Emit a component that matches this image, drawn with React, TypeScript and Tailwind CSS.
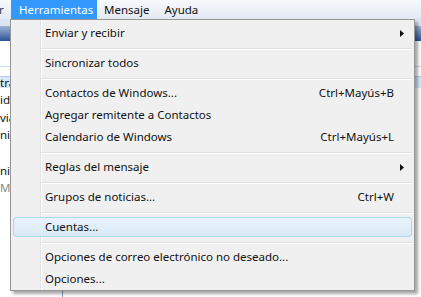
import React from "react";

type Item =
  | { label: string; shortcut?: string; sub?: boolean; hover?: boolean }
  | "sep";

const items: Item[] = [
  { label: "Enviar y recibir", sub: true },
  "sep",
  { label: "Sincronizar todos" },
  "sep",
  { label: "Contactos de Windows...", shortcut: "Ctrl+Mayús+B" },
  { label: "Agregar remitente a Contactos" },
  { label: "Calendario de Windows", shortcut: "Ctrl+Mayús+L" },
  "sep",
  { label: "Reglas del mensaje", sub: true },
  "sep",
  { label: "Grupos de noticias...", shortcut: "Ctrl+W" },
  "sep",
  { label: "Cuentas...", hover: true },
  "sep",
  { label: "Opciones de correo electrónico no deseado..." },
  { label: "Opciones..." },
];

function Arrow() {
  return (
    <svg width="4" height="7" viewBox="0 0 4 7">
      <path d="M0 0 L4 3.5 L0 7 Z" fill="#111" />
    </svg>
  );
}

function Menu() {
  return (
    <div className="absolute left-[10px] top-[19px] w-[405px] h-[272px] border border-[#979797] bg-[#f0f0f0] pt-[2px] shadow-[3px_3px_3px_rgba(0,0,0,0.35)]">
      <div className="absolute left-[29px] top-0 bottom-0 w-[1px] bg-[#e2e3e3]" />
      <div className="absolute left-[30px] top-0 bottom-0 w-[1px] bg-white" />
      {items.map((it, i) =>
        it === "sep" ? (
          <div key={i} className="relative h-[8px] ml-[30px] mr-[2px] pt-[4px]">
            <div className="h-[1px] bg-[#e0e0e0]" />
            <div className="h-[1px] bg-white" />
          </div>
        ) : (
          <div key={i} className="relative z-10 h-[22px] px-[2px] py-[1px]">
            <div
              className={
                it.hover
                  ? "h-full flex items-center rounded-[3px] border border-[#a8d8eb] bg-[linear-gradient(#e8f3fa,#d9eaf5)] pl-[31px] pr-[7px]"
                  : "h-full flex items-center rounded-[3px] border border-transparent pl-[31px] pr-[7px]"
              }
            >
              <span className="flex-1 whitespace-nowrap">{it.label}</span>
              {it.shortcut && <span className="whitespace-nowrap">{it.shortcut}</span>}
              <span className="w-[10px] flex justify-end items-center">
                {it.sub && <Arrow />}
              </span>
            </div>
          </div>
        )
      )}
    </div>
  );
}

export default function App() {
  return (
    <div className="relative w-[421px] h-[297px] overflow-hidden bg-white text-[11.5px] text-[#111] font-['Noto_Sans',sans-serif] leading-none">
      {/* menu bar */}
      <div className="h-[19px] flex items-stretch bg-[linear-gradient(#f7f9fc,#e3e9f4)]">
        <div className="w-[11px] flex items-center overflow-hidden text-[#1e395b]">
          <span className="ml-[-1px]">r</span>
        </div>
        <div className="w-[86px] flex items-center pl-[8px] bg-[#3399ff] text-white">Herramientas</div>
        <div className="flex items-center pl-[7px] pr-[8px]">Mensaje</div>
        <div className="flex items-center pl-[7px]">Ayuda</div>
      </div>
      {/* toolbar */}
      <div className="h-[7px] bg-[#dce4f2]" />
      <div className="h-[15px] bg-[linear-gradient(#9fb3d5,#2a5395)]" />
      <div className="h-[1px] bg-white" />
      <div className="h-[25px] bg-white border-b border-[#c8d8ee]" />
      {/* folder list behind */}
      <div className="flex flex-col pt-[9px]">
        <div className="h-[12px] bg-[#d9e7f8] border-t border-[#b5cdee] flex items-center whitespace-nowrap">tra</div>
        <div className="h-[17px] flex items-end whitespace-nowrap">id</div>
        <div className="h-[18px] flex items-end whitespace-nowrap">via</div>
        <div className="h-[17px] flex items-end whitespace-nowrap">ni</div>
        <div className="h-[18px]" />
        <div className="h-[18px] flex items-end whitespace-nowrap">ni</div>
        <div className="h-[17px] flex items-end whitespace-nowrap text-[#8a8a8a]">M</div>
      </div>
      <div className="absolute left-[62px] top-[291px] w-[1px] h-[6px] bg-[#8aa0c0]" />
      <Menu />
    </div>
  );
}
